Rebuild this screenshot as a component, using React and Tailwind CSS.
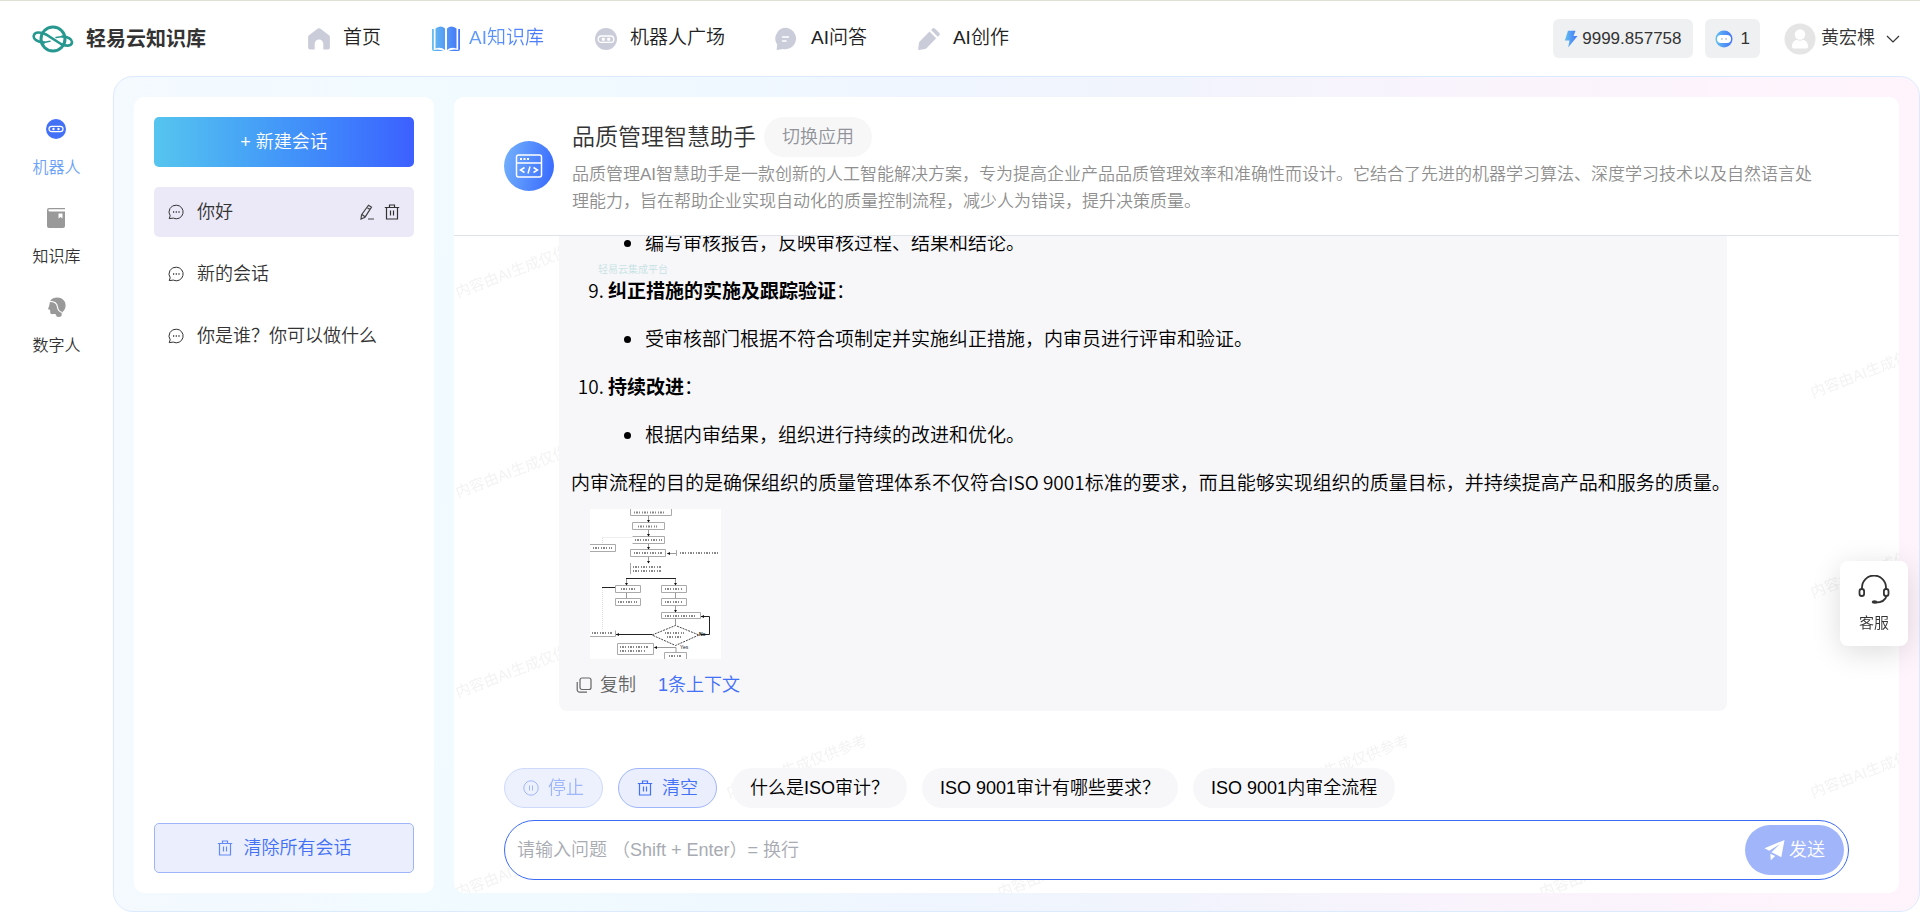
import React, { useState } from 'react';

const navigation = [
  { name: '首页', href: '#home', icon: HomeIcon },
  { name: 'AI知识库', href: '#knowledge', icon: BookIcon, active: true },
  { name: '机器人广场', href: '#square', icon: RobotIcon },
  { name: 'AI问答', href: '#qa', icon: ChatIcon },
  { name: 'AI创作', href: '#create', icon: PencilIcon },
];

const sideLinks = [
  { name: '机器人', href: '#robot', icon: SideRobotIcon, active: true },
  { name: '知识库', href: '#library', icon: SideBookIcon },
  { name: '数字人', href: '#human', icon: SideHumanIcon },
];

const sessions = ['你好', '新的会话', '你是谁？你可以做什么'];

const suggestions = ['什么是ISO审计？', 'ISO 9001审计有哪些要求？', 'ISO 9001内审全流程'];

/* ---------- icons ---------- */

function Logo() {
  return (
    <svg width="42" height="28" viewBox="0 0 42 28" fill="none" stroke="#26988f" strokeLinecap="round">
      <circle cx="21" cy="14" r="12" strokeWidth="3" />
      <path
        d="M12 17.5C5 17 1 14 1.8 10.500C2.800 6.500 9 7 14 9.500L29 19C33 21.300 39.500 21.500 40 17.500C40.400 14.500 36 11.500 30.500 11.500"
        strokeWidth="2.6"
      />
      <path d="M11.500 17.500L18 16.300" strokeWidth="1.500" />
      <path d="M24 12.500L31 11.500" strokeWidth="1.500" />
    </svg>
  );
}

function HomeIcon() {
  return (
    <svg width="24" height="24" viewBox="0 0 24 24">
      <path
        d="M10.800 1.600a2 2 0 0 1 2.400 0l8.800 6.600a2 2 0 0 1 .9 1.700V20.500a2 2 0 0 1-2 2h-4.600v-5.700a4.300 4.300 0 0 0-8.600 0v5.700H3.100a2 2 0 0 1-2-2V9.900a2 2 0 0 1 .9-1.700z"
        fill="#cbccda"
      />
    </svg>
  );
}

function BookIcon() {
  return (
    <svg width="30" height="26" viewBox="0 0 30 26">
      <defs>
        <linearGradient id="bookFill" x1="0" x2="1">
          <stop offset="0" stopColor="#64bdf0" />
          <stop offset="1" stopColor="#4273fa" />
        </linearGradient>
      </defs>
      <g fill="url(#bookFill)">
        <path d="M4.500 2.500Q10 -1.500 14 2.500V24Q10 20.500 4.500 22.500z M16 2.500Q20 -1.500 25.500 2.500V22.500Q20 20.500 16 24z M1 3h1.800v21q5 -1.500 10 1H3a2 2 0 0 1-2-2z M29 3h-1.800v21q-5 -1.500 -10 1H27a2 2 0 0 0 2-2z" />
      </g>
    </svg>
  );
}

function RobotIcon() {
  return (
    <svg width="24" height="24" viewBox="0 0 24 24">
      <circle cx="12" cy="12" r="11" fill="#cbccda" />
      <rect x="4.200" y="9" width="15.600" height="6.400" rx="3.200" fill="none" stroke="#fff" strokeWidth="1.300" />
      <rect x="7.800" y="10.800" width="3" height="3" rx=".8" fill="#fff" />
      <rect x="13.200" y="10.800" width="3" height="3" rx=".8" fill="#fff" />
    </svg>
  );
}

function ChatIcon() {
  return (
    <svg width="24" height="24" viewBox="0 0 24 24">
      <path d="M12.500 1a10.700 10.700 0 1 1-4.500 21L2.500 23c-.8 0-1-.5-.8-1.200l.5-4.200A10.700 10.700 0 0 1 12.500 1z" fill="#cbccda" />
      <path d="M7.500 10h6M7.500 14h3.600" stroke="#fff" strokeWidth="1.500" strokeLinecap="round" />
    </svg>
  );
}

function PencilIcon() {
  return (
    <svg width="24" height="24" viewBox="0 0 24 24" fill="#cbccda">
      <path d="M12.500 4.500l6.700 6.700L9.500 21.200a3 3 0 0 1-1.700.9l-5.500.8c-.8.1-1.200-.4-1.100-1.100l.7-5.600a3 3 0 0 1 .8-1.700z" />
      <path d="M14 3l1.600-1.500a1.600 1.600 0 0 1 2.200 0l4.600 4.600a1.600 1.600 0 0 1 0 2.200L20.800 9.800z" />
    </svg>
  );
}

function SideRobotIcon() {
  return (
    <svg width="22" height="22" viewBox="0 0 22 22">
      <circle cx="11" cy="11" r="10" fill="#4270f7" />
      <rect x="4" y="8.300" width="14" height="5.400" rx="2.700" fill="none" stroke="#fff" strokeWidth="1.200" />
      <circle cx="8.500" cy="11" r="1.200" fill="#fff" />
      <circle cx="13.500" cy="11" r="1.200" fill="#fff" />
    </svg>
  );
}

function SideBookIcon() {
  return (
    <svg width="22" height="22" viewBox="0 0 22 22" fill="#999">
      <path d="M4 1h16v1.200H4.500a.9.900 0 0 0 0 2.300H20V19a2 2 0 0 1-2 2H4a2 2 0 0 1-2-2V3a2 2 0 0 1 2-2z" />
      <path d="M13.500 6.500h4v5l-2-1.500-2 1.500z" fill="#fff" />
    </svg>
  );
}

function SideHumanIcon() {
  return (
    <svg width="22" height="22" viewBox="0 0 22 22">
      <path
        d="M5 5C8 .5 16 .3 19.300 5c2.200 3.500 1.500 8-1.300 10.500-1 .9-1.500 1.500-1.400 4.500-2 1.200-4 1.100-5.200.3-.2-2-1-2.500-3-2.200-2.400.3-3.400-.3-3.200-2.600l-.2-1.700-2-.6L4.400 9z"
        fill="#999"
      />
      <path d="M3 5.500C9 5 12 7 12.500 11c.3 3 1.500 4.500 4.500 5.500" fill="none" stroke="#fff" strokeWidth="1.200" />
    </svg>
  );
}

function BubbleIcon() {
  return (
    <svg width="16" height="16" viewBox="0 0 16 16" fill="none" stroke="#333">
      <path d="M8.300 1.200a6.800 6.800 0 1 1-3 12.900L1.200 14.600l1-2.800A6.800 6.800 0 0 1 8.300 1.200z" />
      <path d="M5 8h1.200M7.700 8h1.200M10.400 8h1.200" strokeWidth="1.400" />
    </svg>
  );
}

function EditIcon() {
  return (
    <svg width="16" height="16" viewBox="0 0 16 16" fill="none" stroke="#444" strokeWidth="1.200">
      <path d="M9.500 1.200l3 2L6 13.200 2 15l.6-4.300zM8 3.500l3 2M3 10.500l3 2.200M9 15h6" />
    </svg>
  );
}

function TrashIcon({ className = '' }) {
  return (
    <svg width="16" height="16" viewBox="0 0 16 16" fill="none" stroke="currentColor" strokeWidth="1.200" className={className}>
      <path d="M.8 3.500h14.400M5.500 3.200V1h5v2.200M2.500 3.500V15h11V3.500M6.500 6.500v5M9.500 6.500v5" />
    </svg>
  );
}

function PauseIcon() {
  return (
    <svg width="16" height="16" viewBox="0 0 16 16" fill="none" stroke="currentColor">
      <circle cx="8" cy="8" r="7.200" />
      <path d="M6.500 5.500v5M9.500 5.500v5" />
    </svg>
  );
}

function CopyIcon() {
  return (
    <svg width="16" height="16" viewBox="0 0 16 16" fill="none" stroke="#666" strokeWidth="1.200">
      <rect x="4" y="1" width="11" height="11.500" rx="2" />
      <path d="M1.200 5v7.500a2.500 2.500 0 0 0 2.500 2.700H11" />
    </svg>
  );
}

function BoltIcon() {
  return (
    <svg width="14" height="18" viewBox="0 0 14 18">
      <defs>
        <linearGradient id="boltFill" x1="0" x2="1">
          <stop offset="0" stopColor="#63c1ee" />
          <stop offset="1" stopColor="#4372fb" />
        </linearGradient>
      </defs>
      <path d="M4 .8h7.500L9.500 6H13.500L4.200 17.500 5.500 10.500H.8z" fill="url(#boltFill)" />
    </svg>
  );
}

function BadgeIcon() {
  return (
    <svg width="18" height="18" viewBox="0 0 18 18">
      <circle cx="9" cy="9" r="8.500" fill="url(#boltFill)" />
      <rect x="2" y="5" width="14" height="8" rx="4" fill="#fff" />
      <path d="M6 9h1.800M10.200 9H12" stroke="#b9c3d8" strokeWidth="1.500" />
    </svg>
  );
}

function AvatarIcon() {
  return (
    <svg width="32" height="32" viewBox="0 0 32 32">
      <circle cx="16" cy="16" r="15.500" fill="#e5e5e5" />
      <circle cx="16" cy="11.500" r="5.200" fill="#fff" />
      <path d="M8 23.500c0-4 2.500-6.500 5-6.500q3 1.500 6 0c2.500 0 5 2.500 5 6.500 0 1.500-1 2-2 2H10c-1 0-2-.5-2-2z" fill="#fff" />
    </svg>
  );
}

function AppIcon() {
  return (
    <svg width="50" height="50" viewBox="0 0 50 50" fill="none" stroke="#fff" strokeWidth="1.500" className="shrink-0">
      <defs>
        <linearGradient id="appFill" x1="0" x2="1" y1=".4" y2=".6">
          <stop offset="0" stopColor="#70aefb" />
          <stop offset="1" stopColor="#3a6cff" />
        </linearGradient>
      </defs>
      <circle cx="25" cy="25" r="25" fill="url(#appFill)" stroke="none" />
      <rect x="12.500" y="14" width="25" height="22" rx="2" />
      <path d="M12.500 22h25" />
      <path d="M16 18h2M19.500 18h2M23 18h2" strokeWidth="2" />
      <path d="M20.500 26.500L16.500 29l4 2.500M29.500 26.500l4 2.500-4 2.500M26 25.500l-2 7" />
    </svg>
  );
}

function SendIcon() {
  return (
    <svg width="21" height="22" viewBox="0 0 21 22" fill="#fff">
      <path d="M20.500 1L.5 9.200l4.800 2.600L16 5 7.500 13.200l9.800 5z" />
      <path d="M6.300 14.800l4.800 2.300-4.300 4.200z" />
    </svg>
  );
}

function HeadsetIcon() {
  return (
    <svg width="32" height="30" viewBox="0 0 32 30" fill="none" stroke="#333" strokeWidth="1.800">
      <path d="M4 15v-2.500a12 12 0 0 1 24 0V15" />
      <rect x="1.500" y="14" width="4.600" height="7" rx="2.300" />
      <rect x="25.900" y="14" width="4.600" height="7" rx="2.300" />
      <path d="M28.500 21c-1 4-5 6.500-11 6.500" />
      <ellipse cx="16.500" cy="27" rx="2.800" ry="1.700" fill="#333" stroke="none" />
    </svg>
  );
}

/* Thumbnail of the audit flow chart attached to the answer */
function FlowChart() {
  return (
    <svg width="131" height="150" viewBox="0 0 131 150" className="bg-white" role="img" aria-label="内审流程图">
      <g fill="none" stroke="#aaa" strokeWidth="1">
        <path d="M40.500 0v6.500h41V0M42.500 13.500h32v7h-32zM42.500 27.500h32v7h-32M0 35.500h25.500v7H0M40.500 40.500h35v7h-35zM86.500 41v6M40.500 54v11M25.500 76.500h25v7h-25zM71.500 76.500h25v7h-25zM25.500 89.500h25v7h-25zM71.500 89.500h25v7h-25zM71.500 103.500h39v6h-39zM0 127.500h25.500v-6M27.500 134.500h36v11h-36zM74.500 150v-6.500h22v6.500" />
      </g>
      <g fill="none" stroke="#999" strokeWidth="1">
        <path d="M58.500 7v6M58.500 21v6M58.500 35v5M58.500 48v6M36.500 69.500v6M85.500 69.500v6M36.500 84v5M85.500 84v5M85.500 97v6M85.500 110v6M64 138.500h22v5M77 44.500h9" />
        <path d="M12.500 79v42M12.500 28.500h30M12.500 29v6" stroke="#ddd" strokeDasharray="1 1" />
        <path d="M36 69.500h50M12 78.500h13M111 107.500h8.500v18h-9M26 125.500h36" stroke="#222" />
        <path d="M62 126L85.500 116.500 109 126 85.500 136.500z" stroke="#444" strokeDasharray="2 1" />
      </g>
      <g fill="none" stroke="#888" strokeWidth="2" strokeDasharray="1 1 2 1 1 2">
        <path d="M44 3.500h32M48 17.500h19M45 31h27M3 39h19M44 44h28M90 44h38M43 58h29M43 62h28M31 80h14M75 80h17M28 93h19M75 93h18M75 107h31M2 124h20M75 124h19M77 128h14M30 138h28M30 142h25M79 147h13" />
      </g>
      <g fill="#111">
        <path d="M57 11h3l-1.500 2.500zM57 25h3l-1.500 2.500zM57 38h3l-1.500 2.500zM57 52h3l-1.500 2.500zM35 74h3l-1.500 2.500zM84 74h3l-1.500 2.500zM84 101h3l-1.500 2.500zM26 125.500l3-1.500v3zM77 44.500l3-1.500v3zM64 138.500l3-1.500v3zM111 107.500l3-1.500v3z" />
        <text x="109" y="127" fontSize="5" fontWeight="700" fontFamily="Liberation Sans, sans-serif">No</text>
        <text x="90" y="140" fontSize="5" fontFamily="Liberation Sans, sans-serif">Yes</text>
      </g>
    </svg>
  );
}

function Watermark() {
  return (
    <svg className="pointer-events-none absolute inset-0 h-full w-full" aria-hidden="true">
      <defs>
        <pattern id="watermark" y="10" width="542" height="200" patternUnits="userSpaceOnUse">
          <g fill="#f3f3f3" fontSize="15" fontWeight="400" fontFamily="Liberation Sans, Noto Sans CJK SC, sans-serif">
            <text transform="translate(4 191) rotate(-21)">内容由AI生成仅供参考</text>
            <text transform="translate(275 91) rotate(-21)">内容由AI生成仅供参考</text>
          </g>
        </pattern>
      </defs>
      <rect width="100%" height="100%" fill="url(#watermark)" />
    </svg>
  );
}

/* ---------- page parts ---------- */

function Header() {
  return (
    <header className="flex h-[76px] shrink-0 items-center justify-between border-t border-[#dfe1d3] pr-5 pl-8">
      <div className="flex items-center">
        <a href="#top" className="flex w-[275px] items-center gap-3 text-xl font-bold text-[#333]">
          <Logo />
          轻易云知识库
        </a>
        <nav className="flex items-center gap-[50px]">
          {navigation.map((item) => (
            <a
              key={item.name}
              href={item.href}
              className={`flex items-center text-[19px] ${
                item.active
                  ? 'gap-2 bg-linear-to-r from-[#70b0f8] to-[#4a78fb] bg-clip-text text-transparent'
                  : 'gap-3 text-[#222]'
              }`}
            >
              <item.icon />
              <span>{item.name}</span>
            </a>
          ))}
        </nav>
      </div>

      <div className="flex items-center text-[18px] text-[#333]">
        <div className="flex h-[39px] items-center gap-1 rounded-md bg-[#eff0f2] px-[11px] text-[17px]">
          <BoltIcon />
          9999.857758
        </div>
        <div className="ml-3 flex h-[39px] items-center gap-2 rounded-md bg-[#eff0f2] px-[10px] text-[17px]">
          <BadgeIcon />
          <span>1</span>
        </div>
        <button className="ml-6 flex items-center gap-[5px]">
          <AvatarIcon />
          <span>黄宏棵</span>
          <svg width="14" height="8" viewBox="0 0 14 8" fill="none" stroke="#333" strokeWidth="1.200" className="ml-[6px]">
            <path d="M1 1l6 6 6-6" />
          </svg>
        </button>
      </div>
    </header>
  );
}

function SideBar() {
  return (
    <nav className="flex w-[113px] shrink-0 flex-col items-center gap-[29px] pt-[42px]">
      {sideLinks.map((item) => (
        <a key={item.name} href={item.href} className="flex flex-col items-center gap-[18px] text-base leading-5">
          <item.icon />
          <span className={item.active ? 'text-[#6ba2f8]' : 'text-[#333]'}>{item.name}</span>
        </a>
      ))}
    </nav>
  );
}

function SessionList({ current, onSelect }) {
  return (
    <section className="flex w-[300px] shrink-0 flex-col rounded-[10px] bg-white p-5">
      <button className="h-[50px] shrink-0 rounded-[5px] bg-linear-to-r from-[#56c5ee] to-[#3d5fff] text-[18px] text-white">
        + 新建会话
      </button>
      <ul className="mt-5 flex flex-1 flex-col gap-3">
        {sessions.map((name, index) => (
          <li
            key={name}
            className={`flex h-[50px] items-center rounded-[5px] px-[14px] text-[#333] ${
              index === current ? 'bg-[#ebe9f8]' : ''
            }`}
          >
            <button className="flex flex-1 items-center gap-[13px] text-left text-[18px]" onClick={() => onSelect(index)}>
              <BubbleIcon />
              {name}
            </button>
            {index === current && (
              <div className="flex gap-[9px]">
                <button aria-label="重命名">
                  <EditIcon />
                </button>
                <button aria-label="删除">
                  <TrashIcon />
                </button>
              </div>
            )}
          </li>
        ))}
      </ul>
      <button className="flex h-[50px] shrink-0 items-center justify-center gap-[11px] rounded-[5px] border border-[#9fb5fb] bg-[#ebeefc] text-[18px] text-[#4270f7]">
        <TrashIcon className="opacity-80" />
        清除所有会话
      </button>
    </section>
  );
}

function Answer() {
  return (
    <article className="mr-[172px] ml-[105px] rounded-lg bg-[#f7f7fa] px-3 pt-3 pb-3 font-['Noto_Sans_CJK_SC',sans-serif] text-[19px] leading-7 text-black">
      <ol start={8} className="flex list-decimal flex-col gap-5 pl-[37px]">
        <li className="list-none">
          <ul className="list-disc pl-[37px]">
            <li>编写审核报告，反映审核过程、结果和结论。</li>
          </ul>
        </li>
        <li>
          <strong className="font-bold">纠正措施的实施及跟踪验证</strong>：
          <ul className="mt-5 list-disc pl-[37px]">
            <li>受审核部门根据不符合项制定并实施纠正措施，内审员进行评审和验证。</li>
          </ul>
        </li>
        <li>
          <strong className="font-bold">持续改进</strong>：
          <ul className="mt-5 list-disc pl-[37px]">
            <li>根据内审结果，组织进行持续的改进和优化。</li>
          </ul>
        </li>
      </ol>
      <p className="mt-5 whitespace-nowrap">
        内审流程的目的是确保组织的质量管理体系不仅符合ISO 9001标准的要求，而且能够实现组织的质量目标，并持续提高产品和服务的质量。
      </p>
      <div className="mt-[13px] ml-[19px]">
        <FlowChart />
      </div>
      <div className="mt-3 ml-[5px] flex items-center gap-[22px] font-['Liberation_Sans','Noto_Sans_CJK_SC',sans-serif] text-[18px]">
        <button className="flex items-center gap-2 text-[#666]">
          <CopyIcon />
          复制
        </button>
        <button className="text-[#4270f7]">1条上下文</button>
      </div>
    </article>
  );
}

function ChatPanel() {
  const [question, setQuestion] = useState('');

  return (
    <section className="relative flex min-w-0 flex-1 flex-col overflow-hidden rounded-[10px] bg-white">
      <Watermark />

      <div className="relative flex shrink-0 items-center gap-[18px] border-b border-[#dfe2e8] bg-white py-5 pr-[50px] pl-[50px]">
        <AppIcon />
        <div className="min-w-0 flex-1">
          <div className="flex items-center gap-2">
            <h1 className="text-[23px] text-[#333]">品质管理智慧助手</h1>
            <button className="h-10 rounded-full bg-[#f7f7f8] px-[18px] text-[18px] text-[#909399]">切换应用</button>
          </div>
          <p className="mt-1 mr-[25px] text-[17px] leading-[27px] text-[#8f8f8f]">
            品质管理AI智慧助手是一款创新的人工智能解决方案，专为提高企业产品品质管理效率和准确性而设计。它结合了先进的机器学习算法、深度学习技术以及自然语言处理能力，旨在帮助企业实现自动化的质量控制流程，减少人为错误，提升决策质量。
          </p>
        </div>
      </div>

      <div className="relative flex min-h-0 flex-1 flex-col justify-end overflow-hidden pb-[57px]">
        <Answer />
      </div>
      <span className="pointer-events-none absolute top-[165px] left-[144px] text-[10px] leading-4 text-[#c6e2e3]" aria-hidden="true">
        轻易云集成平台
      </span>

      <div className="relative mr-[50px] mb-[13px] ml-[50px] flex shrink-0 flex-col gap-3">
        <div className="flex gap-[15px] text-[18px] text-black">
          <button
            className="flex h-10 items-center gap-[9px] rounded-full border border-[#9fb5fb] bg-[#dce4fd] px-[18px] text-[#4270f7] opacity-50"
            disabled
          >
            <PauseIcon />
            停止
          </button>
          <button className="flex h-10 items-center gap-[9px] rounded-full border border-[#9fb5fb] bg-[#ebeefc] px-[18px] text-[#4270f7]">
            <TrashIcon />
            清空
          </button>
          {suggestions.map((text) => (
            <button key={text} className="h-10 rounded-full bg-[#f7f7fa] px-[18px]" onClick={() => setQuestion(text)}>
              {text}
            </button>
          ))}
        </div>
        <div className="flex h-[60px] items-center rounded-full border border-[#3d6bf5] bg-white pr-1 pl-3">
          <textarea
            rows={1}
            aria-label="问题"
            value={question}
            onChange={(e) => setQuestion(e.target.value)}
            placeholder="请输入问题 （Shift + Enter）= 换行"
            className="h-7 flex-1 resize-none overflow-hidden text-[18px] leading-7 outline-none placeholder:text-[#a8abb2]"
          />
          <button className="flex h-[50px] w-[99px] items-center justify-center gap-1 rounded-full bg-[#a1b5fb] text-[18px] text-white">
            <SendIcon />
            发送
          </button>
        </div>
      </div>
    </section>
  );
}

export default function App() {
  const [current, setCurrent] = useState(0);

  return (
    <div className="flex h-screen flex-col overflow-hidden bg-white font-['Liberation_Sans','Noto_Sans_CJK_SC',sans-serif] font-[350]">
      <Header />
      <div className="flex min-h-0 flex-1">
        <SideBar />
        <main className="flex min-w-0 flex-1 gap-5 rounded-[20px] border border-[#dceaff] bg-[linear-gradient(90deg,#f4faff_0%,#f1fbff_20%,#eff6ff_42%,#f0f4fd_55%,#f9f3fc_75%,#fff4fc_100%)] px-5 pt-5 pb-[18px]">
          <SessionList current={current} onSelect={setCurrent} />
          <ChatPanel />
        </main>
      </div>

      {/* Floating customer service entry */}
      <button className="fixed top-[561px] right-3 flex h-[85px] w-[68px] flex-col items-center justify-center gap-2 rounded-lg bg-white text-[15px] leading-5 text-[#333] shadow-[0_6px_30px_rgba(0,0,0,0.14)]">
        <HeadsetIcon />
        客服
      </button>
    </div>
  );
}
